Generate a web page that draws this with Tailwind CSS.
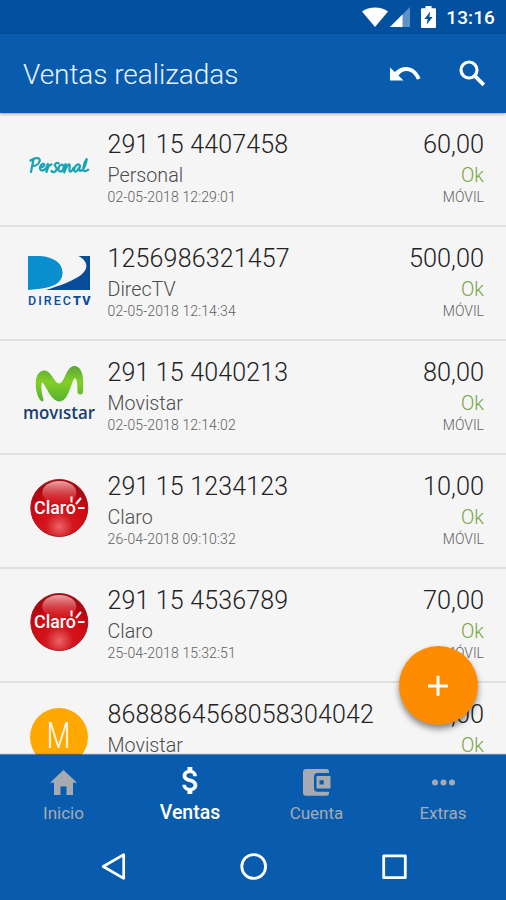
<!DOCTYPE html>
<html lang="es">
<head>
<meta charset="utf-8">
<title>Ventas realizadas</title>
<script src="https://cdn.jsdelivr.net/npm/@tailwindcss/browser@4"></script>
</head>
<body class="w-[506px] h-[900px] overflow-hidden bg-[#f5f5f5] font-['Roboto',sans-serif]">
<div class="relative flex h-[900px] w-[506px] flex-col overflow-hidden">
  <div class="flex h-[34px] shrink-0 items-center justify-end bg-[#03509e] pr-[11px] text-white">
    <svg class="mr-[2px]" width="26" height="20" viewBox="0 0 26 20"><path fill="#fff" d="M0 4.600C7-.9 19-.9 26 4.600L13 20z"/></svg>
    <svg class="mr-[11px]" width="20" height="20" viewBox="0 0 20 20"><path fill="#5d92c6" d="M20 0v20H0z"/><path fill="#fff" d="M12.500 7.500V20H0z"/></svg>
    <svg class="mr-[10px]" width="15" height="22" viewBox="0 0 15 22"><path fill="#fff" d="M4.500 0h6v2.300H14q1 0 1 1V21q0 1-1 1H1q-1 0-1-1V3.300q0-1 1-1h3.500z"/><path fill="#03509e" d="M9.200 5.500 3.500 13h3.200l-1 5.500 6-7.500H8.400z"/></svg>
    <span class="pt-[2px] text-[19px] font-medium leading-[36px] tracking-[0.1px]">13:16</span>
  </div>
  <header class="z-10 flex h-[79px] shrink-0 items-center bg-[#095bad] pl-[23px] pr-[20px] text-white shadow-[0_1px_3px_rgba(0,0,0,0.35)]">
    <h1 class="flex-1 pt-[3px] text-[28px] font-light tracking-[-0.050px] text-[#eaf2ff]">Ventas realizadas</h1>
    <svg class="mr-[38px]" width="31" height="16" viewBox="0 0 31 16"><path fill="#fff" d="M0 1.500 4.800 6C12-1.500 25-1.500 30.500 12.200L27 13.800C22.500 3.500 14 2.800 8.500 9.400L13.500 14.500H0z"/></svg>
    <svg width="27" height="27" viewBox="0 0 27 27" fill="none" stroke="#fff"><circle cx="10" cy="10" r="8" stroke-width="3.200"/><path d="m15.800 15.800 9 9" stroke-width="3.800"/></svg>
  </header>

  <main id="list" class="h-[642px] shrink-0 overflow-hidden"></main>

  <nav class="flex h-[79px] shrink-0 bg-[#095bad] shadow-[0_-1px_1px_rgba(0,50,130,0.6)] text-[17px] text-[#a5abb0]">
    <div class="flex w-[127px] flex-col items-center"><svg class="mt-[15px]" width="27" height="25" viewBox="0 0 27 25"><path fill="currentColor" d="M13.500 0 27 12.700h-4V25h-6.500v-8.500h-6V25H4V12.700H0z"/></svg><span class="mt-[5px] leading-[26px]">Inicio</span></div>
    <div class="flex w-[126px] flex-col items-center text-white"><svg class="mt-[12px]" width="17" height="27" viewBox="5.900 3 12 18" preserveAspectRatio="none"><path fill="currentColor" stroke="currentColor" stroke-width=".4" d="M11.800 10.900c-2.270-.59-3-1.200-3-2.150 0-1.090 1.010-1.850 2.700-1.850 1.780 0 2.440.85 2.500 2.100h2.210c-.07-1.720-1.120-3.300-3.210-3.810V3h-3v2.160c-1.940.42-3.500 1.680-3.500 3.610 0 2.310 1.910 3.460 4.700 4.130 2.500.6 3 1.480 3 2.410 0 .69-.49 1.790-2.700 1.790-2.060 0-2.870-.92-2.980-2.100h-2.200c.12 2.190 1.760 3.420 3.680 3.830V21h3v-2.150c1.950-.37 3.500-1.500 3.500-3.550 0-2.840-2.430-3.810-4.700-4.400z"/></svg><span class="mt-[6px] text-[19.500px] font-medium leading-[26px]">Ventas</span></div>
    <div class="flex w-[127px] flex-col items-center"><svg class="mt-[14px]" width="28" height="27" viewBox="0 0 28 27"><path fill="currentColor" d="M3 0h20.500q2.500 0 2.500 2.500V4H14.500Q11 4 11 7.500v11.800q0 3.500 3.500 3.500H26V24q0 2.700-2.500 2.700H3q-3 0-3-3V3q0-3 3-3z"/><path fill="currentColor" fill-rule="evenodd" d="M13.500 7H27.500v12.500h-14zM16.500 11.200v4.200h4.200v-4.200z"/></svg><span class="mt-[4px] leading-[26px]">Cuenta</span></div>
    <div class="flex w-[126px] flex-col items-center"><svg class="mt-[24px]" width="23" height="7" viewBox="0 0 23 7"><g fill="currentColor"><circle cx="3" cy="3.500" r="3"/><circle cx="11.500" cy="3.500" r="3"/><circle cx="20" cy="3.500" r="3"/></g></svg><span class="mt-[14px] leading-[26px]">Extras</span></div>
  </nav>
  <div class="flex h-[66px] shrink-0 items-start bg-[#095bad] pl-[101px] pt-[19px]">
    <svg width="25" height="28" viewBox="0 0 25 28" fill="none" stroke="#fff" stroke-width="2.700" stroke-linejoin="round"><path d="M22.700 1.700v23.600L2.200 13.500z"/></svg>
    <svg class="ml-[114px]" width="28" height="28" viewBox="0 0 28 28" fill="none" stroke="#fff" stroke-width="2.800"><circle cx="13.700" cy="13.500" r="11.900"/></svg>
    <svg class="ml-[114px]" width="25" height="27" viewBox="0 0 25 27" fill="none" stroke="#fff" stroke-width="2.800" stroke-linejoin="round"><path d="M1.700 2.900h21.600v21.800H1.700z"/></svg>
  </div>

  <button class="absolute left-[398.500px] top-[646px] z-20 flex h-[79px] w-[79px] items-center justify-center rounded-full bg-[#ff8b00] shadow-[0_4px_6px_rgba(0,0,0,0.45)]" aria-label="Agregar">
    <svg width="22" height="22" viewBox="0 0 22 22"><path stroke="#fff" stroke-width="3" d="M11 .8v20M1 11h20"/></svg>
  </button>
</div>

<template id="personal"><svg class="mt-[44px] ml-[29px]" width="61" height="20" viewBox="0 0 61 20" fill="none" stroke="#18a4b4" stroke-width="2.200" stroke-linecap="round" stroke-linejoin="round"><path d="M4.500 2 2 15M1.500 3.500C7-.5 12 1 10.500 4.500 9.500 7.500 6 9 3.700 9M11.500 10.500c3 0 5-2.500 3.300-3.500-2-.8-4.300 2.500-3.700 5 .5 2.300 4 1.700 6.400-1.300l1.300-3.700-1.300 8c1-4 3-7.500 5-7.700M29.500 6.300c-2-1-4.500.8-3.500 2.500s2.800 2.500 1 5c-1.500 1.800-4 1.500-4.500.2M33 7.500c-4 .5-4.500 7-1.500 7s4.500-6.500 1.500-7zm3.500-.5-1.200 8.500c1.200-4.500 4.200-9 5.200-8s-1 6.500.3 7c1.700.5 2.700-1.500 3.700-3.500M50 7.500c-3.500-.8-6 6-4 7 2 .8 4.200-3.500 5-6-.7 2.700-1 5.500.5 5.500 3-.5 6-7.500 6.200-12-2.500 3.500-4.500 11-2.500 12 1.500.5 3-.5 4-1.300"/></svg></template>

<template id="directv"><svg class="mt-[28px] ml-[28px]" width="63" height="52" viewBox="0 0 63 52"><path fill="#064c9a" d="M0 1h62v34H0z"/><path fill="#f5f5f5" d="M0 0h48C61 5 62 15 50 22 42 27 31 31 17 35.200H0z"/><path fill="#098fcf" d="M0 1h12C26 2 34 8 34.500 17 35 25 29 30 21 32 14 34 7 34.500 0 35z"/><g fill="#0b4f9b" font-family="Roboto" font-size="12.500"><text x="0" y="49.500" font-weight="500" textLength="43">DIREC</text><text x="45" y="49.500" font-weight="900" textLength="17.500">TV</text></g></svg></template>

<template id="movistar"><svg class="mt-[24px] ml-[21px]" width="78" height="62" viewBox="-2 0 78 62"><defs><linearGradient id="mg" x1="0" y1="0" x2="0" y2="1"><stop offset="0" stop-color="#5aa638"/><stop offset=".45" stop-color="#83cf27"/><stop offset="1" stop-color="#55b12f"/></linearGradient></defs><path fill="url(#mg)" d="M19 36.500C14.500 34 12.500 25 12.800 17 13 10 17 5 22 5.500 28.500 6 31 18 36 18.500 42 18 42.500 3 50.500 1 58 .5 60 9 60.200 17 60.300 21 60.500 25 59.800 28 58 30.500 54.800 29.500 54.500 27.500 54.500 22 54.500 14 52 13 48 16 46 36.500 36.500 36.500 27 36 23 19 19 17.500 17.500 21 19 29 20.500 34.500 20.500 36 19.800 36.800 19 36.500z"/><text x="0" y="53.500" fill="#153f73" font-family="Open Sans" font-size="17.500" font-weight="600" textLength="72" lengthAdjust="spacingAndGlyphs">movıstar</text></svg></template>

<template id="claro"><svg class="mt-[23px] ml-[30px]" width="59" height="60" viewBox="0 0 59 60"><defs><radialGradient id="cg" cx=".5" cy=".83" r=".8"><stop offset="0" stop-color="#e96566"/><stop offset=".3" stop-color="#d3161e"/><stop offset=".66" stop-color="#d00712"/><stop offset="1" stop-color="#960b12"/></radialGradient><linearGradient id="ch" x1="0" y1="0" x2="0" y2="1"><stop offset="0" stop-color="#f0a4a5"/><stop offset="1" stop-color="#d52a30" stop-opacity=".3"/></linearGradient></defs><circle cx="29.300" cy="30" r="28.500" fill="url(#cg)" stroke="#a71820"/><ellipse cx="29.300" cy="14.500" rx="17" ry="11.500" fill="url(#ch)"/><text x="4" y="36" fill="#fff" font-family="Roboto" font-size="18" font-weight="500" textLength="42" lengthAdjust="spacingAndGlyphs">Claro</text><path fill="none" stroke="#fff" stroke-width="2" d="M41.500 18.500v6M46 26l5-6M48 30h6.500"/></svg></template>

<template id="initial"><div class="mt-[25px] ml-[30px] flex h-[58px] w-[58px] items-center justify-center rounded-full bg-[#ffa802] pb-[3px] text-[36px] font-light leading-[36px] text-white"><span class="inline-block scale-x-[0.76]">M</span></div></template>

<template id="row">
  <article class="flex h-[114px] border-b-2 border-[#dfdfdf]">
    <div data-logo class="w-[107.500px] shrink-0"></div>
    <div class="flex-1 whitespace-nowrap pt-[17px]">
      <div data-number class="text-[25px] font-light leading-[30px] tracking-[0.160px] text-[#222]"></div>
      <div data-name class="mt-[2px] text-[19.700px] font-light leading-[28px] text-[#4c4c4c]"></div>
      <div data-date class="text-[14px] font-light leading-[15px] tracking-[0.120px] text-[#606060]"></div>
    </div>
    <div class="pr-[22px] pt-[17px] text-right">
      <div data-amount class="text-[25.300px] font-light leading-[30px] text-[#222]"></div>
      <div class="mt-[2px] text-[19.700px] font-light leading-[28px] text-[#75a343]">Ok</div>
      <div data-channel class="text-[14px] font-light leading-[15px] text-[#606060]"></div>
    </div>
  </article>
</template>
<script>
const sales = [
  ['personal', '291 15 4407458', 'Personal', '02-05-2018 12:29:01', '60,00', 'MÓVIL'],
  ['directv', '1256986321457', 'DirecTV', '02-05-2018 12:14:34', '500,00', 'MÓVIL'],
  ['movistar', '291 15 4040213', 'Movistar', '02-05-2018 12:14:02', '80,00', 'MÓVIL'],
  ['claro', '291 15 1234123', 'Claro', '26-04-2018 09:10:32', '10,00', 'MÓVIL'],
  ['claro', '291 15 4536789', 'Claro', '25-04-2018 15:32:51', '70,00', 'MÓVIL'],
  ['initial', '8688864568058304042', 'Movistar', '', '50,00', '']
];
const list = document.getElementById('list');
for (const [logo, number, name, date, amount, channel] of sales) {
  const row = document.getElementById('row').content.cloneNode(true);
  row.querySelector('[data-logo]').append(document.getElementById(logo).content.cloneNode(true));
  row.querySelector('[data-number]').textContent = number;
  row.querySelector('[data-name]').textContent = name;
  row.querySelector('[data-date]').textContent = date;
  row.querySelector('[data-amount]').textContent = amount;
  row.querySelector('[data-channel]').textContent = channel;
  list.append(row);
}
</script>
</body>
</html>
